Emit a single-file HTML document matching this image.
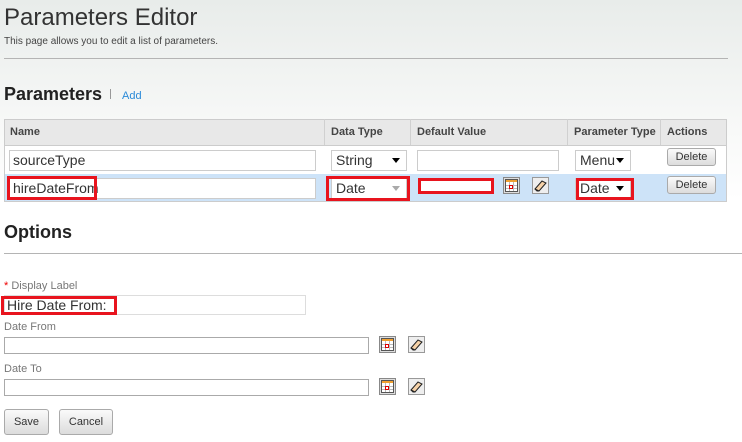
<!DOCTYPE html><html><head><style>
body{margin:0;width:742px;height:442px;overflow:hidden;font-family:"Liberation Sans",sans-serif;background:linear-gradient(#e8ecea 0,#f7f8f7 120px,#fff 200px);position:relative;color:#333}
.a{position:absolute}
.inp{position:absolute;background:#fff;border:1px solid #aaa;box-sizing:border-box}
.red{position:absolute;border:3px solid #e8141e;box-sizing:border-box}
.th{position:absolute;top:119px;height:26px;line-height:26px;font-size:11px;font-weight:bold;color:#444;padding-left:6px;box-sizing:border-box;border-right:1px solid #d0d0d0}
.sel{position:absolute;background:#fff;border:1px solid #ccc;box-sizing:border-box;font-size:14px;line-height:18px;padding-left:4px}
.sel:after{content:"";position:absolute;right:6px;top:7px;border:4px solid transparent;border-top:5px solid #000}
.sel.g:after{border-top-color:#aaa}
.btn{position:absolute;border:1px solid #aaa;border-radius:3px;background:linear-gradient(#fafafa,#dcdcdc);font-size:11px;text-align:center;box-sizing:border-box}
.lbl{position:absolute;font-size:11px;color:#777}
svg{position:absolute}
</style></head><body>
<svg width="0" height="0"><defs>
<g id="cal"><rect x="0.5" y="0.5" width="16" height="16" fill="#ddd" stroke="#888"/><rect x="2.5" y="2.5" width="12" height="12" fill="#fff" stroke="#555"/><rect x="3" y="3" width="11" height="2" fill="#f0a030"/><path d="M3 8.5h11M3 11.5h11M6.5 5v9M10.5 5v9" stroke="#bbb"/><rect x="6.5" y="8.5" width="3" height="3" fill="none" stroke="#d00"/></g>
<g id="era"><rect x="0.5" y="0.5" width="16" height="16" fill="#eee" stroke="#999"/><path d="M3 12 L10 4 L14 6 L7 14 Z" fill="#f6d2a8" stroke="#222"/><path d="M3 12 L5 14 L7 14" fill="none" stroke="#222"/></g>
</defs></svg>
<div class="a" style="left:4px;top:4px;font-size:24px;color:#333">Parameters Editor</div>
<div class="a" style="left:4px;top:36px;font-size:10px;color:#444">This page allows you to edit a list of parameters.</div>
<div class="a" style="left:4px;top:58px;width:724px;height:1px;background:#b4b4b4"></div>
<div class="a" style="left:4px;top:84px;font-size:18px;font-weight:bold;color:#222">Parameters</div>
<div class="a" style="left:110px;top:89px;width:1px;height:10px;background:#999"></div>
<div class="a" style="left:122px;top:90px;font-size:11px;color:#2a8ad8">Add</div>
<div class="a" style="left:4px;top:119px;width:723px;height:83px;border:1px solid #ccc;box-sizing:border-box;background:#fff"></div>
<div class="a" style="left:5px;top:120px;width:721px;height:25px;background:#e8e8e8;border-bottom:1px solid #ccc"></div>
<div class="a" style="left:5px;top:174px;width:721px;height:27px;background:#cde3f8"></div>
<div class="th" style="left:4px;width:321px">Name</div>
<div class="th" style="left:325px;width:86px">Data Type</div>
<div class="th" style="left:411px;width:157px">Default Value</div>
<div class="th" style="left:568px;width:93px">Parameter Type</div>
<div class="th" style="left:661px;width:66px;border:none">Actions</div>
<div class="inp" style="left:9px;top:150px;width:307px;height:21px;border-color:#ccc;font-size:14px;padding:1px 3px">sourceType</div>
<div class="sel" style="left:331px;top:150px;width:76px;height:21px">String</div>
<div class="inp" style="left:417px;top:150px;width:142px;height:21px;border-color:#ccc"></div>
<div class="sel" style="left:575px;top:150px;width:56px;height:21px">Menu</div>
<div class="btn" style="left:667px;top:148px;width:49px;height:18px;line-height:16px">Delete</div>
<div class="inp" style="left:9px;top:178px;width:307px;height:21px;border-color:#ccc;font-size:14px;padding:1px 3px">hireDateFrom</div>
<div class="red" style="left:7px;top:176px;width:90px;height:24px"></div>
<div class="sel g" style="left:331px;top:178px;width:76px;height:21px">Date</div>
<div class="red" style="left:326px;top:176px;width:84px;height:25px"></div>
<div class="red" style="left:418px;top:178px;width:76px;height:16px;background:#fff"></div>
<svg style="left:503px;top:177px" width="17" height="17"><use href="#cal"/></svg>
<svg style="left:532px;top:177px" width="17" height="17"><use href="#era"/></svg>
<div class="sel" style="left:575px;top:178px;width:56px;height:21px">Date</div>
<div class="red" style="left:576px;top:178px;width:58px;height:22px"></div>
<div class="btn" style="left:667px;top:176px;width:49px;height:18px;line-height:16px">Delete</div>
<div class="a" style="left:4px;top:222px;font-size:18px;font-weight:bold;color:#222">Options</div>
<div class="a" style="left:4px;top:253px;width:738px;height:1px;background:#b4b4b4"></div>
<div class="lbl" style="left:4px;top:280px"><span style="color:#e00">*</span> Display Label</div>
<div class="inp" style="left:4px;top:295px;width:302px;height:20px;border-color:#ddd;font-size:14px;padding:1px 2px">Hire Date From:</div>
<div class="red" style="left:1px;top:296px;width:116px;height:19px"></div>
<div class="lbl" style="left:4px;top:321px">Date From</div>
<div class="inp" style="left:4px;top:337px;width:365px;height:17px"></div>
<div class="lbl" style="left:4px;top:363px">Date To</div>
<div class="inp" style="left:4px;top:379px;width:365px;height:17px"></div>
<svg style="left:379px;top:336px" width="17" height="17"><use href="#cal"/></svg>
<svg style="left:408px;top:336px" width="17" height="17"><use href="#era"/></svg>
<svg style="left:379px;top:378px" width="17" height="17"><use href="#cal"/></svg>
<svg style="left:408px;top:378px" width="17" height="17"><use href="#era"/></svg>
<div class="btn" style="left:4px;top:409px;width:45px;height:26px;line-height:24px">Save</div>
<div class="btn" style="left:59px;top:409px;width:54px;height:26px;line-height:24px">Cancel</div>
</body></html>
